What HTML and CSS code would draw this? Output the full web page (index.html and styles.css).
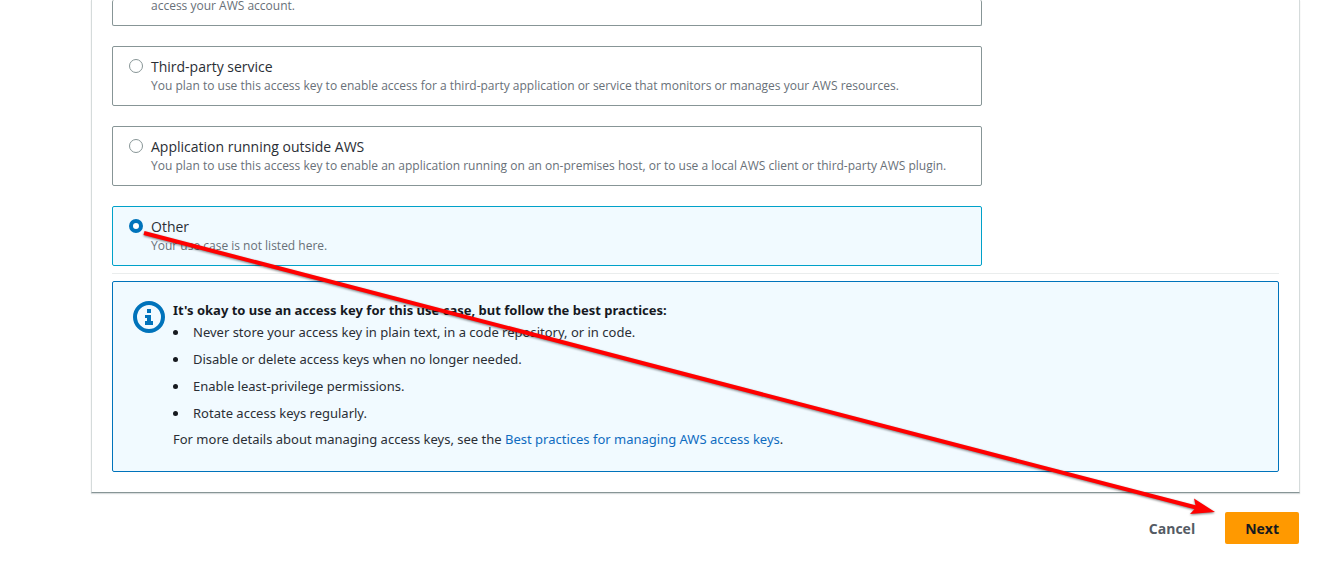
FILE: index.html
```
<!DOCTYPE html>
<html lang="en">
<head>
<meta charset="utf-8">
<title>Access key best practices</title>
<link rel="stylesheet" href="styles.css">
</head>
<body>
<main class="page">
  <section class="panel">
    <div class="options">
      <div class="card card-cut">
        <p class="card-desc">access your AWS account.</p>
      </div>
      <label class="card">
        <input class="radio" type="radio" name="use-case">
        <span class="card-text">
          <span class="card-title">Third-party service</span>
          <span class="card-desc">You plan to use this access key to enable access for a third-party application or service that monitors or manages your AWS resources.</span>
        </span>
      </label>
      <label class="card">
        <input class="radio" type="radio" name="use-case">
        <span class="card-text">
          <span class="card-title">Application running outside AWS</span>
          <span class="card-desc">You plan to use this access key to enable an application running on an on-premises host, or to use a local AWS client or third-party AWS plugin.</span>
        </span>
      </label>
      <label class="card card-selected">
        <input class="radio" type="radio" name="use-case" checked>
        <span class="card-text">
          <span class="card-title">Other</span>
          <span class="card-desc">Your use case is not listed here.</span>
        </span>
      </label>
    </div>
    <hr class="divider">
    <div class="alert">
      <svg class="alert-icon" viewBox="0 0 32 32" aria-hidden="true">
        <circle cx="16" cy="16" r="14" fill="none" stroke="#0073bb" stroke-width="4"/>
        <path fill="#0073bb" d="M14 8h4v4h-4zM12 14h6v6h2v4h-8v-4h2v-3h-2z"/>
      </svg>
      <div class="alert-body">
        <h2 class="alert-title">It's okay to use an access key for this use case, but follow the best practices:</h2>
        <ul class="tips">
          <li>Never store your access key in plain text, in a code repository, or in code.</li>
          <li>Disable or delete access keys when no longer needed.</li>
          <li>Enable least-privilege permissions.</li>
          <li>Rotate access keys regularly.</li>
        </ul>
        <p class="more">For more details about managing access keys, see the <a class="link" href="#">Best practices for managing AWS access keys</a>.</p>
      </div>
    </div>
  </section>
  <div class="actions">
    <button class="btn btn-link" type="button">Cancel</button>
    <button class="btn btn-primary" type="button">Next</button>
  </div>
  <svg class="arrow" width="1325" height="580" viewBox="0 0 1325 580" aria-hidden="true">
    <path d="M144 233L1198 508" fill="none" stroke="#f00" stroke-width="4"/>
    <path d="M1215 512L1194 498.500L1196 507.500L1190 514z" fill="#f00"/>
  </svg>
</main>
</body>
</html>
```
FILE: styles.css
```
* {
  box-sizing: border-box;
}

body {
  margin: 0;
  background: #fff;
  color: #2a2e35;
  font-family: "Open Sans", "Noto Sans", sans-serif;
  font-size: 14px;
  line-height: 20px;
  overflow-x: hidden;
}

.page {
  position: relative;
  padding: 0 25px 36px 91px;
}

.panel {
  padding: 0 20px 20px;
  border: 1px solid #d5dbdb;
  border-top: 0;
  border-bottom-color: #879596;
  box-shadow: 0 1px 1px rgba(0, 28, 36, 0.15);
}

.options {
  display: flex;
  flex-direction: column;
  gap: 20px;
  max-width: 870px;
}

.card {
  display: flex;
  align-items: flex-start;
  gap: 8px;
  padding: 10px 16px;
  border: 1px solid #879596;
  border-radius: 2px;
}

.card-cut {
  padding: 0 16px 13px 38px;
  border-top: 0;
}

.card-cut .card-desc {
  line-height: 12px;
}

.card-selected {
  border-color: #00a1c9;
  background: #f1faff;
}

.radio {
  appearance: none;
  flex: none;
  width: 14px;
  height: 14px;
  margin: 2px 0 0;
  border: 1px solid #879596;
  border-radius: 50%;
  background: #fff;
}

.radio:checked {
  border: 4px solid #0073bb;
}

.card-text {
  display: flex;
  flex-direction: column;
}

.card-title {
  line-height: 20px;
}

.card-desc {
  margin: 0;
  color: #687078;
  font-size: 12px;
  line-height: 18px;
}

.divider {
  height: 1px;
  margin: 7px 0;
  border: 0;
  background: #eaeded;
}

.alert {
  display: flex;
  gap: 8px;
  padding: 18px 20px 21px;
  border: 1px solid #0073bb;
  border-radius: 2px;
  background: #f1faff;
  font-family: "Noto Sans", "Open Sans", sans-serif;
  font-size: 13px;
}

.alert-icon {
  flex: none;
  width: 32px;
  height: 32px;
  margin-top: 1px;
}

.alert-title {
  margin: 0;
  color: #16191f;
  font-size: 13px;
  font-weight: 700;
  line-height: 20px;
}

.tips {
  display: grid;
  gap: 5px;
  margin: 1px 0 4px;
  padding: 0;
  line-height: 22px;
  list-style: none;
}

.tips li {
  display: flex;
  align-items: center;
  gap: 15px;
}

.tips li::before {
  content: "";
  flex: none;
  width: 5px;
  height: 5px;
  border-radius: 50%;
  background: #16191f;
}

.more {
  margin: 0;
  line-height: 22px;
}

.link {
  color: #0f6cbf;
  text-decoration: none;
}

.actions {
  display: flex;
  justify-content: flex-end;
  gap: 10px;
  padding: 19px 1px 0 0;
}

.btn {
  height: 32px;
  padding: 2px 20px 0;
  border: 0;
  border-radius: 2px;
  font: 700 14px/20px "Open Sans", "Noto Sans", sans-serif;
}

.btn-link {
  background: transparent;
  color: #545b64;
}

.btn-primary {
  background: #ff9900;
  color: #16191f;
}

.arrow {
  position: absolute;
  top: 0;
  left: 0;
  pointer-events: none;
  filter: drop-shadow(0 1px 1px rgba(0, 0, 0, 0.5));
}
```
